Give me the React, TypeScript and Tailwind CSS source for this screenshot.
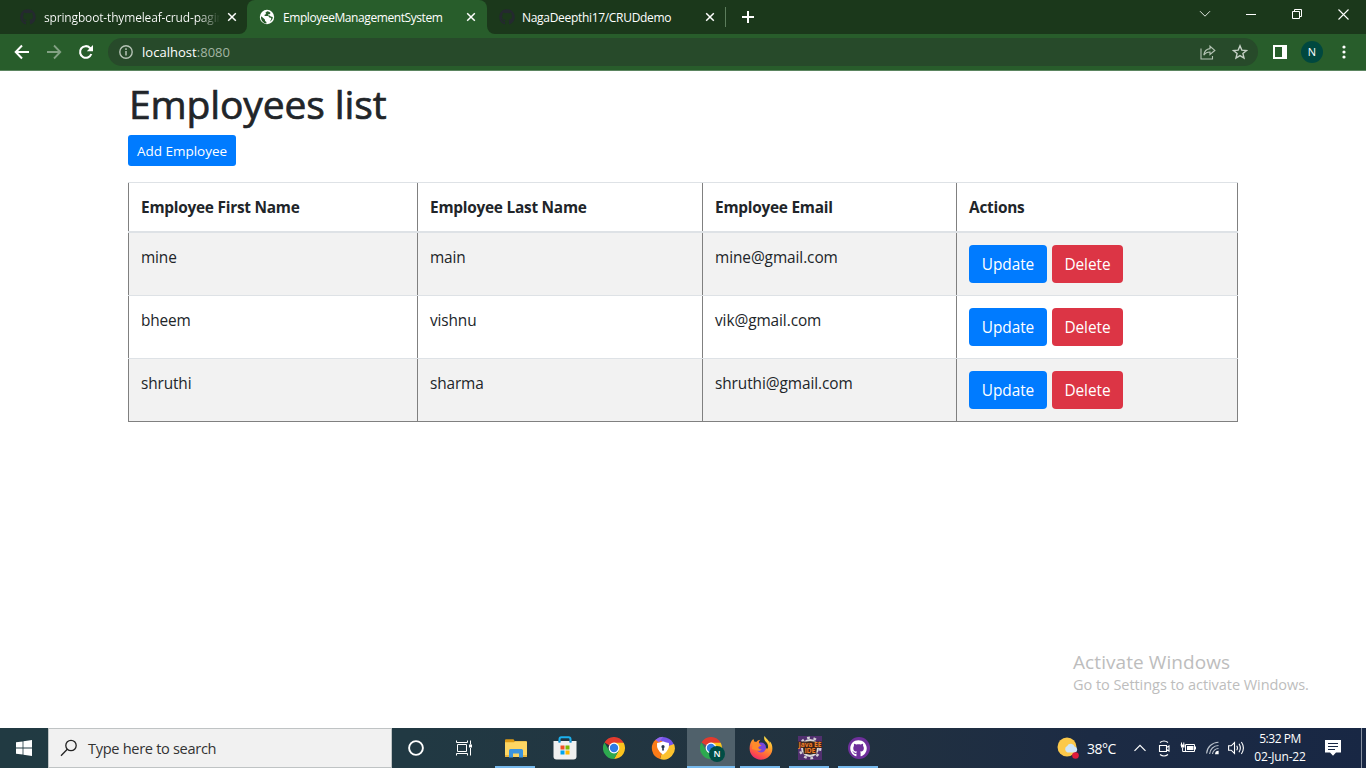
import type { ReactNode } from "react";
import { FaGithub } from "react-icons/fa";

const employees = [
  { first: "mine", last: "main", email: "mine@gmail.com" },
  { first: "bheem", last: "vishnu", email: "vik@gmail.com" },
  { first: "shruthi", last: "sharma", email: "shruthi@gmail.com" },
];

function CloseX() {
  return (
    <svg width="10" height="10" viewBox="0 0 10 10" className="shrink-0">
      <path d="M1.2 1.2l7.6 7.6M8.8 1.2l-7.6 7.6" stroke="#fff" strokeWidth="1.5" />
    </svg>
  );
}

function GlobeIcon() {
  return (
    <svg width="16" height="16" viewBox="0 0 16 16" className="shrink-0">
      <circle cx="8" cy="8" r="7.2" fill="#fff" />
      <path
        d="M2.3 7.2l3.6 3.4.2 1.4 1.3 1v1.6c-3-.3-5.3-2.8-5.4-6z M8.2 2.2L6.4 3.8l.8 1.2-1.6.8v1.3h3.6l1.5 1.6h1.2l.4 1.4-1.5 2.6c1.8-1 3-2.8 3-4.7l-2-.4-1.2-1.2H9.2V5.2h1.4l1-1.3c-1-.9-2-1.5-3.4-1.7z"
        fill="#285c2b"
      />
    </svg>
  );
}

function TabStrip() {
  return (
    <div className="flex h-[34px] bg-[#285d2b] text-[12px] text-white">
      <div className="flex w-[247px] items-center rounded-br-lg bg-[#1b381b] pl-[20px]">
        <FaGithub size={16} color="#24292f" className="shrink-0" />
        <span className="ml-[8px] w-[176px] overflow-hidden whitespace-nowrap bg-[linear-gradient(90deg,#fff_155px,transparent_176px)] bg-clip-text pt-px tracking-[-0.16px] text-transparent">
          springboot-thymeleaf-crud-pagin
        </span>
        <span className="ml-[7px]"><CloseX /></span>
      </div>
      <div className="w-[240px] bg-[#1b381b]">
        <div className="flex h-full items-center rounded-t-lg bg-[#285d2b] pl-[12px]">
          <GlobeIcon />
          <span className="ml-[8px] w-[183px] whitespace-nowrap pt-px tracking-[-0.42px]">EmployeeManagementSystem</span>
          <CloseX />
        </div>
      </div>
      <div className="flex flex-1 items-center rounded-bl-lg bg-[#1b381b] pl-[12px]">
        <FaGithub size={16} color="#24292f" className="shrink-0" />
        <span className="ml-[7px] w-[183px] whitespace-nowrap pt-px tracking-[-0.31px]">NagaDeepthi17/CRUDdemo</span>
        <CloseX />
        <span className="ml-[10px] h-[20px] w-px bg-[#5c7d5c]" />
        <svg width="12" height="12" viewBox="0 0 12 12" className="ml-[16px]">
          <path d="M6 0v12M0 6h12" stroke="#fff" strokeWidth="2" />
        </svg>
        <div className="ml-auto flex h-[28px] items-center self-start pr-[17px]">
          <svg width="12" height="8" viewBox="0 0 12 8" className="mr-[35px]">
            <path d="M1 1.2l5 5 5-5" fill="none" stroke="#dfe6df" strokeWidth="1" />
          </svg>
          <svg width="10" height="10" viewBox="0 0 10 10" className="mr-[36px]">
            <path d="M0 5.5h10" stroke="#fff" />
          </svg>
          <svg width="10" height="10" viewBox="0 0 10 10" className="mr-[36px]">
            <path d="M.5 2.5h7v7h-7zM2.5 2.500V.5h7v7h-2" fill="none" stroke="#fff" />
          </svg>
          <svg width="11" height="11" viewBox="0 0 11 11">
            <path d="M.5.5l10 10M10.500.5l-10 10" stroke="#fff" strokeWidth="1.1" />
          </svg>
        </div>
      </div>
    </div>
  );
}

function Toolbar() {
  return (
    <div className="flex h-[37px] items-center border-b border-[#5b8560] bg-[#285d2b] pl-[14px]">
      <svg width="16" height="16" viewBox="0 0 16 16">
        <path d="M15 8H2M8 1.500L1.700 8L8 14.500" fill="none" stroke="#fff" strokeWidth="2" />
      </svg>
      <svg width="16" height="16" viewBox="0 0 16 16" className="ml-[16px]">
        <path d="M1 8h13M8 1.500L14.300 8L8 14.500" fill="none" stroke="#83a184" strokeWidth="1.800" />
      </svg>
      <svg width="16" height="16" viewBox="0 0 16 16" className="ml-[16px]">
        <path d="M13.300 10a5.800 5.800 0 1 1-1.300-6.100L13.500 5.500" fill="none" stroke="#fff" strokeWidth="2.100" />
        <path d="M15 1v6.200H8.800z" fill="#fff" />
      </svg>
      <div className="ml-[14px] flex h-[28px] w-[1150px] items-center rounded-full bg-[#274a2a] pl-[11px]">
        <svg width="14" height="14" viewBox="0 0 14 14">
          <circle cx="7" cy="7" r="6.200" fill="none" stroke="#b6c3b6" strokeWidth="1.400" />
          <path d="M7 6v4.500M7 3.300v1.600" stroke="#b6c3b6" strokeWidth="1.500" />
        </svg>
        <span className="ml-[9px] pt-px text-[13px] tracking-[0.03px] text-white">
          localhost<span className="text-[#a3b5a3]">:8080</span>
        </span>
        <svg width="16" height="15" viewBox="0 0 16 15" className="ml-auto">
          <path d="M1 3.500V14h11.500v-3" fill="none" stroke="#b3c2b3" strokeWidth="1.100" />
          <path d="M10 1.200l4.800 4.200L10 9.500V7C7 7 5.300 8 3.800 10.200 4.300 6.500 6.500 4 10 3.700z" fill="none" stroke="#b3c2b3" strokeWidth="1.200" />
        </svg>
        <svg width="16" height="16" viewBox="0 0 16 16" className="ml-[16px] mr-[10px]">
          <path d="M8 1.800l1.800 4.300 4.700.4-3.600 3 1.100 4.600L8 11.600l-4 2.500 1.100-4.600-3.600-3 4.700-.4z" fill="none" stroke="#c5d0c5" strokeWidth="1.400" />
        </svg>
      </div>
      <svg width="14" height="14" viewBox="0 0 14 14" className="ml-[15px]">
        <path d="M0 0h14v14H0zM2 2v10h7V2z" fill="#fff" fillRule="evenodd" />
      </svg>
      <div className="ml-[14px] flex size-[22px] items-center justify-center rounded-full bg-[#00483f] text-[11px] text-white">N</div>
      <svg width="4" height="14" viewBox="0 0 4 14" className="ml-[19px]">
        <circle cx="2" cy="2" r="1.600" fill="#fff" />
        <circle cx="2" cy="7" r="1.600" fill="#fff" />
        <circle cx="2" cy="12" r="1.600" fill="#fff" />
      </svg>
    </div>
  );
}

const columns = "grid grid-cols-[289px_285px_254px_282px]";

function EmployeeTable() {
  return (
    <div role="table" className="mt-[16px] w-[1110px] border-t border-[#dee2e6] text-[15.4px] leading-[24px]">
      <div role="row" className={columns + " h-[50px] border-b-2 border-[#dee2e6] font-bold tracking-[-0.24px]"}>
        <div role="columnheader" className="border-l border-[#808080] px-[12px] pt-[13px]">Employee First Name</div>
        <div role="columnheader" className="border-l border-[#808080] px-[12px] pt-[13px]">Employee Last Name</div>
        <div role="columnheader" className="border-l border-[#808080] px-[12px] pt-[13px]">Employee Email</div>
        <div role="columnheader" className="border-x border-[#808080] px-[12px] pt-[13px]">Actions</div>
      </div>
      {employees.map((e) => (
        <div
          role="row"
          key={e.email}
          className={columns + " h-[63px] border-b border-[#dee2e6] tracking-[-0.13px] last:border-[#808080] even:bg-[#f2f2f2]"}
        >
          <div role="cell" className="border-l border-[#808080] px-[12px] pt-[13px]">{e.first}</div>
          <div role="cell" className="border-l border-[#808080] px-[12px] pt-[13px]">{e.last}</div>
          <div role="cell" className="border-l border-[#808080] px-[12px] pt-[13px] tracking-[-0.08px]">{e.email}</div>
          <div role="cell" className="flex gap-[5px] border-x border-[#808080] py-[12px] pl-[12px] tracking-[-0.05px] text-white">
            <button className="h-[38px] w-[78px] rounded bg-[#007bff] pt-[2px]">Update</button>
            <button className="h-[38px] w-[71px] rounded bg-[#dc3545] pt-[2px]">Delete</button>
          </div>
        </div>
      ))}
    </div>
  );
}

function ChromeLogo() {
  return (
    <svg width="22" height="22" viewBox="0 0 22 22">
      <path d="M11 11L1.470 5.500A11 11 0 0 1 20.530 5.500z" fill="#e33b2e" />
      <path d="M11 5.800h9.700A11 11 0 0 1 11 22l4.600-8.300z" fill="#fcc31e" />
      <path d="M1.470 5.500L6.400 14l4.600 2.200 4.600-2.500L11 22A11 11 0 0 1 1.470 5.500z" fill="#2da94f" />
      <circle cx="11" cy="11" r="5.400" fill="#fff" />
      <circle cx="11" cy="11" r="4.200" fill="#2e7be6" />
    </svg>
  );
}

function ExplorerIcon() {
  return (
    <svg width="22" height="19" viewBox="0 0 22 19">
      <path d="M0 1.200Q0 .3 1 .3h7.500l1.300 2H21q1 0 1 1v4H0z" fill="#dd9a14" />
      <path d="M0 3.300h9l1-1h11q1 0 1 1V17q0 1-1 1H1q-1 0-1-1z" fill="#fdd663" />
      <path d="M4 18.500V11.500q0-1.500 1.500-1.500h11q1.500 0 1.500 1.500v7h-4v-4H8v4z" fill="#3b94df" />
      <path d="M0 16h4v2H1q-1 0-1-1zM18 16h4v1q0 1-1 1h-3z" fill="#eab53c" />
    </svg>
  );
}

function StoreIcon() {
  return (
    <svg width="24" height="24" viewBox="0 0 24 24">
      <path d="M.5 5h23v15.500q0 3-3 3h-17q-3 0-3-3z" fill="#f0f0f0" />
      <path d="M6.500 6.500V3.200q0-1.900 1.900-1.900h7.200q1.900 0 1.900 1.900V6.500" fill="none" stroke="#1cb1ee" strokeWidth="2" />
      <path d="M6.500 5v1.500M17.500 5v1.500" stroke="#1689cc" strokeWidth="2" />
      <path d="M7.500 9.500h4v4h-4z" fill="#f25022" />
      <path d="M12.500 9.500h4v4h-4z" fill="#7fba00" />
      <path d="M7.500 14.500h4v4h-4z" fill="#00a4ef" />
      <path d="M12.500 14.500h4v4h-4z" fill="#ffb900" />
    </svg>
  );
}

function SecureBrowserIcon() {
  return (
    <svg width="24" height="24" viewBox="0 0 24 24">
      <path d="M12 12L4 4.500A11.300 11.300 0 0 1 23 9.500z" fill="#7655ec" />
      <path d="M12 12l11-4a11.300 11.300 0 0 1-14 15z" fill="#fcc22e" />
      <path d="M12 12L9 23A11.300 11.300 0 0 1 4.600 3.800L11 5z" fill="#fb7b18" />
      <path d="M4.600 3.800Q8 .8 12 .7l-4 5.800z" fill="#9368ef" />
      <path d="M12 6.500q2.500 1.300 5 1.200.6 6-5 9.800Q6.400 13.700 7 7.700q2.500.1 5-1.200z" fill="#fff" stroke="#fff" strokeWidth="2" strokeLinejoin="round" />
      <circle cx="12" cy="10.700" r="1.600" fill="#29364d" />
      <path d="M11.300 11h1.400l.2 3.600h-1.800z" fill="#29364d" />
    </svg>
  );
}

function FirefoxIcon() {
  return (
    <svg width="24" height="24" viewBox="0 0 24 24">
      <defs>
        <linearGradient id="ff" x1=".8" y1="0" x2=".3" y2="1">
          <stop offset="0" stopColor="#fff04f" />
          <stop offset=".4" stopColor="#ffa02a" />
          <stop offset=".75" stopColor="#ff5a42" />
          <stop offset="1" stopColor="#f0286c" />
        </linearGradient>
      </defs>
      <path d="M15.500 0c-1 3 .2 5 2 6.600 1.600 2 1.800 4 1.300 6L8 12 4.300 3C1.800 5 .6 8.600.6 12.500c0 6.300 5.100 11.200 11.400 11.200s11.400-5 11.400-11.200c0-3.100-1-5.700-2.900-7.500l.3 2.500C19.800 4 17.300 3 15.500 0z" fill="url(#ff)" />
      <circle cx="12" cy="11.500" r="5" fill="#7a45dc" />
      <path d="M4.300 3c-.1 1 .1 2 .7 2.800.7-.2 1.400-.2 2.300.1 1.100-1.300 2.500-2 4.200-2.100-.9.8-1.500 1.700-1.600 3 .6 1.200.9 2 2.600 2.700-1.300.9-2.600.6-3.200 1.800-.1 1.100 1 2.400 3.500 2.300-1.300 1.300-3.300 1.700-5.300.7L3 13z" fill="#ff8b29" />
    </svg>
  );
}

function JavaEEIcon() {
  return (
    <svg width="24" height="24" viewBox="0 0 24 24">
      <rect width="24" height="24" fill="#51306f" />
      <circle cx="12" cy="12" r="10.300" fill="none" stroke="#d4d0d6" strokeWidth="2.300" strokeDasharray="2.800 3.670" />
      <circle cx="12" cy="12" r="7.900" fill="#2b2429" stroke="#d8d8d8" strokeWidth="2.200" />
      <rect y="5.500" width="24" height="6.500" fill="#3b2217" opacity=".9" />
      <rect x="5.500" y="12" width="13" height="6" fill="#3b2217" opacity=".9" />
      <text x="12" y="11.200" textAnchor="middle" textLength="23" lengthAdjust="spacingAndGlyphs" fontSize="7" fontWeight="700" fill="#f07d25">Java EE</text>
      <text x="12" y="17.300" textAnchor="middle" textLength="11" fontSize="7" fontWeight="700" fill="#f07d25">IDE</text>
    </svg>
  );
}

function TaskButton({ children, wide, running, active }: { children: ReactNode; wide?: boolean; running?: boolean; active?: boolean }) {
  return (
    <div className={"relative flex h-[40px] items-center justify-center " + (wide ? "w-[49px] " : "w-[48px] ") + (active ? "mr-px bg-[#50616b]" : "")}>
      {children}
      {running && <span className={"absolute bottom-0 h-[2px] bg-[#76b9ed] " + (active ? "inset-x-0" : "left-[4px] w-[40px]")} />}
    </div>
  );
}

function Taskbar() {
  return (
    <div className="flex h-[40px] w-full bg-[linear-gradient(90deg,#213a42_0%,#213943_30%,#22323f_60%,#1c2b44_80%,#182744_100%)] text-white">
      <TaskButton>
        <svg width="16" height="16" viewBox="0 0 16 16">
          <path d="M0 2.300L6.600 1.400V7.500H0zM7.400 1.200L16 0v7.500H7.400zM0 8.500h6.600v6.100L0 13.700zM7.400 8.500H16V16l-8.600-1.200z" fill="#fff" />
        </svg>
      </TaskButton>
      <div className="flex w-[344px] items-center border border-[#bfc3c4] bg-[#f1f1f1] pl-[11px] text-[#333]">
        <svg width="18" height="18" viewBox="0 0 18 18">
          <circle cx="11" cy="6.500" r="5.200" fill="none" stroke="#222" strokeWidth="1.300" />
          <path d="M7.300 10.300L1 16.700" stroke="#222" strokeWidth="1.300" />
        </svg>
        <span className="ml-[10px] pt-px text-[14.600px] tracking-[-0.32px]">Type here to search</span>
      </div>
      <TaskButton>
        <svg width="16" height="16" viewBox="0 0 16 16">
          <circle cx="8" cy="8" r="6.900" fill="none" stroke="#fff" strokeWidth="1.900" />
        </svg>
      </TaskButton>
      <TaskButton wide>
        <svg width="17" height="16" viewBox="0 0 17 16">
          <path d="M1.500 4.500h9v7h-9zM.5.500V2.500h11V.5M.5 15.500v-2h11v2M14.500.500v4M14.500 8v7.500" fill="none" stroke="#fff" />
          <path d="M13 4.500h3v3h-3z" fill="#fff" />
        </svg>
      </TaskButton>
      <div className="ml-[2px] flex">
        <TaskButton wide running><ExplorerIcon /></TaskButton>
        <TaskButton wide><StoreIcon /></TaskButton>
        <TaskButton wide><ChromeLogo /></TaskButton>
        <TaskButton wide><SecureBrowserIcon /></TaskButton>
        <TaskButton active running>
          <ChromeLogo />
          <span className="absolute left-[22px] top-[18px] flex size-[16px] items-center justify-center rounded-full bg-[#004d45] text-[9px] font-semibold">N</span>
        </TaskButton>
        <TaskButton wide running><FirefoxIcon /></TaskButton>
        <TaskButton wide running><JavaEEIcon /></TaskButton>
        <TaskButton wide running>
          <span className="flex size-[22px] items-center justify-center rounded-full bg-[#6e2f9b]"><FaGithub size={17} color="#fff" /></span>
        </TaskButton>
      </div>
      <div className="ml-auto flex items-center">
        <svg width="22" height="22" viewBox="0 0 22 22">
          <circle cx="10" cy="10" r="9.500" fill="#fcc94b" />
          <path d="M10.500 15.500a3.500 3.500 0 0 1-.3-6.500 4 4 0 0 1 7.500.8 2.900 2.900 0 0 1 .3 5.700z" fill="#cfe6fa" />
          <circle cx="18.500" cy="18.500" r="3.300" fill="#e01b3c" />
        </svg>
        <span className="ml-[8px] w-[30px] whitespace-nowrap pt-px text-[14px] tracking-[-0.5px]">38°C</span>
        <svg width="12" height="8" viewBox="0 0 12 8" className="ml-[17px]">
          <path d="M.5 6.800L6 1.300l5.500 5.500" fill="none" stroke="#fff" strokeWidth="1.200" />
        </svg>
        <svg width="12" height="17" viewBox="0 0 12 17" className="ml-[12px]">
          <path d="M1.500 5.500h7v6h-7zM8.500 7.500l2.500-1.500v5l-2.500-1.500M2 2.500Q6-.5 10 2.500M2 14.500q4 3 8 0" fill="none" stroke="#fff" strokeWidth="1.100" />
        </svg>
        <svg width="16" height="12" viewBox="0 0 16 12" className="ml-[10px]">
          <path d="M5.500 2.500h9v7h-9zM.5 3h4M1.500.5V3M3.800.5V3M2.600 5.500v4H6" fill="none" stroke="#fff" />
          <path d="M1 3h3.500v2.500H1zM7 4h6.500v4H7zM15 4.500h1v3h-1z" fill="#fff" />
        </svg>
        <svg width="14" height="14" viewBox="0 0 14 14" className="ml-[10px]">
          <path d="M.6 12.500A12 12 0 0 1 12.500 1.200M3.600 13A9 9 0 0 1 12.500 4.500M6.500 13a6 6 0 0 1 6-5.500" fill="none" stroke="#b9c1cb" strokeWidth="1.100" />
          <path d="M9 13.200a3.600 3.600 0 0 1 3.600-3.400v3.400z" fill="#fff" />
        </svg>
        <svg width="17" height="14" viewBox="0 0 17 14" className="ml-[8px]">
          <path d="M.6 4.800h2.600L6.500 1.500v11L3.200 9.200H.6zM8.700 4.700q1.500 2.300 0 4.600M11 2.800q2.700 4.200 0 8.400M13.400 1q4 6 0 12" fill="none" stroke="#fff" strokeWidth="1.100" />
        </svg>
        <div className="ml-[7px] flex w-[56px] flex-col items-center whitespace-nowrap text-[12px] leading-[18px]">
          <span className="tracking-[-0.45px]">5:32 PM</span>
          <span className="tracking-[-0.2px]">02-Jun-22</span>
        </div>
        <svg width="16" height="16" viewBox="0 0 16 16" className="ml-[17px]">
          <path d="M0 0h16v12.500h-5L8 15.700l-3-3.200H0z" fill="#fff" />
          <path d="M3 3.500h10M3 6.500h10M3 9.500h7" stroke="#182744" />
        </svg>
        <span className="ml-[20px] mr-[4px] h-[40px] w-px bg-[#8790a0]" />
      </div>
    </div>
  );
}

export default function App() {
  return (
    <div className="relative flex h-[768px] w-[1366px] flex-col overflow-hidden bg-white font-['Open_Sans','Noto_Sans',sans-serif] text-[#212529]">
      <TabStrip />
      <Toolbar />
      <main className="flex-1 pl-[128px] pt-[9px]">
        <h1 className="h-[55px] pl-px text-[39px] font-medium leading-[48px] tracking-[-0.12px] [-webkit-text-stroke:0.7px_#212529]">Employees list</h1>
        <button className="block h-[31px] w-[108px] rounded-[3px] bg-[#007bff] pt-[2px] text-[13.500px] tracking-[-0.02px] text-white">Add Employee</button>
        <EmployeeTable />
      </main>
      <div className="absolute left-[1073px] top-[650px] whitespace-nowrap text-[#bdbdbd]">
        <div className="text-[19px] leading-[25px] tracking-[0.08px]">Activate Windows</div>
        <div className="text-[14.500px] leading-[20px] tracking-[-0.05px]">Go to Settings to activate Windows.</div>
      </div>
      <Taskbar />
    </div>
  );
}
